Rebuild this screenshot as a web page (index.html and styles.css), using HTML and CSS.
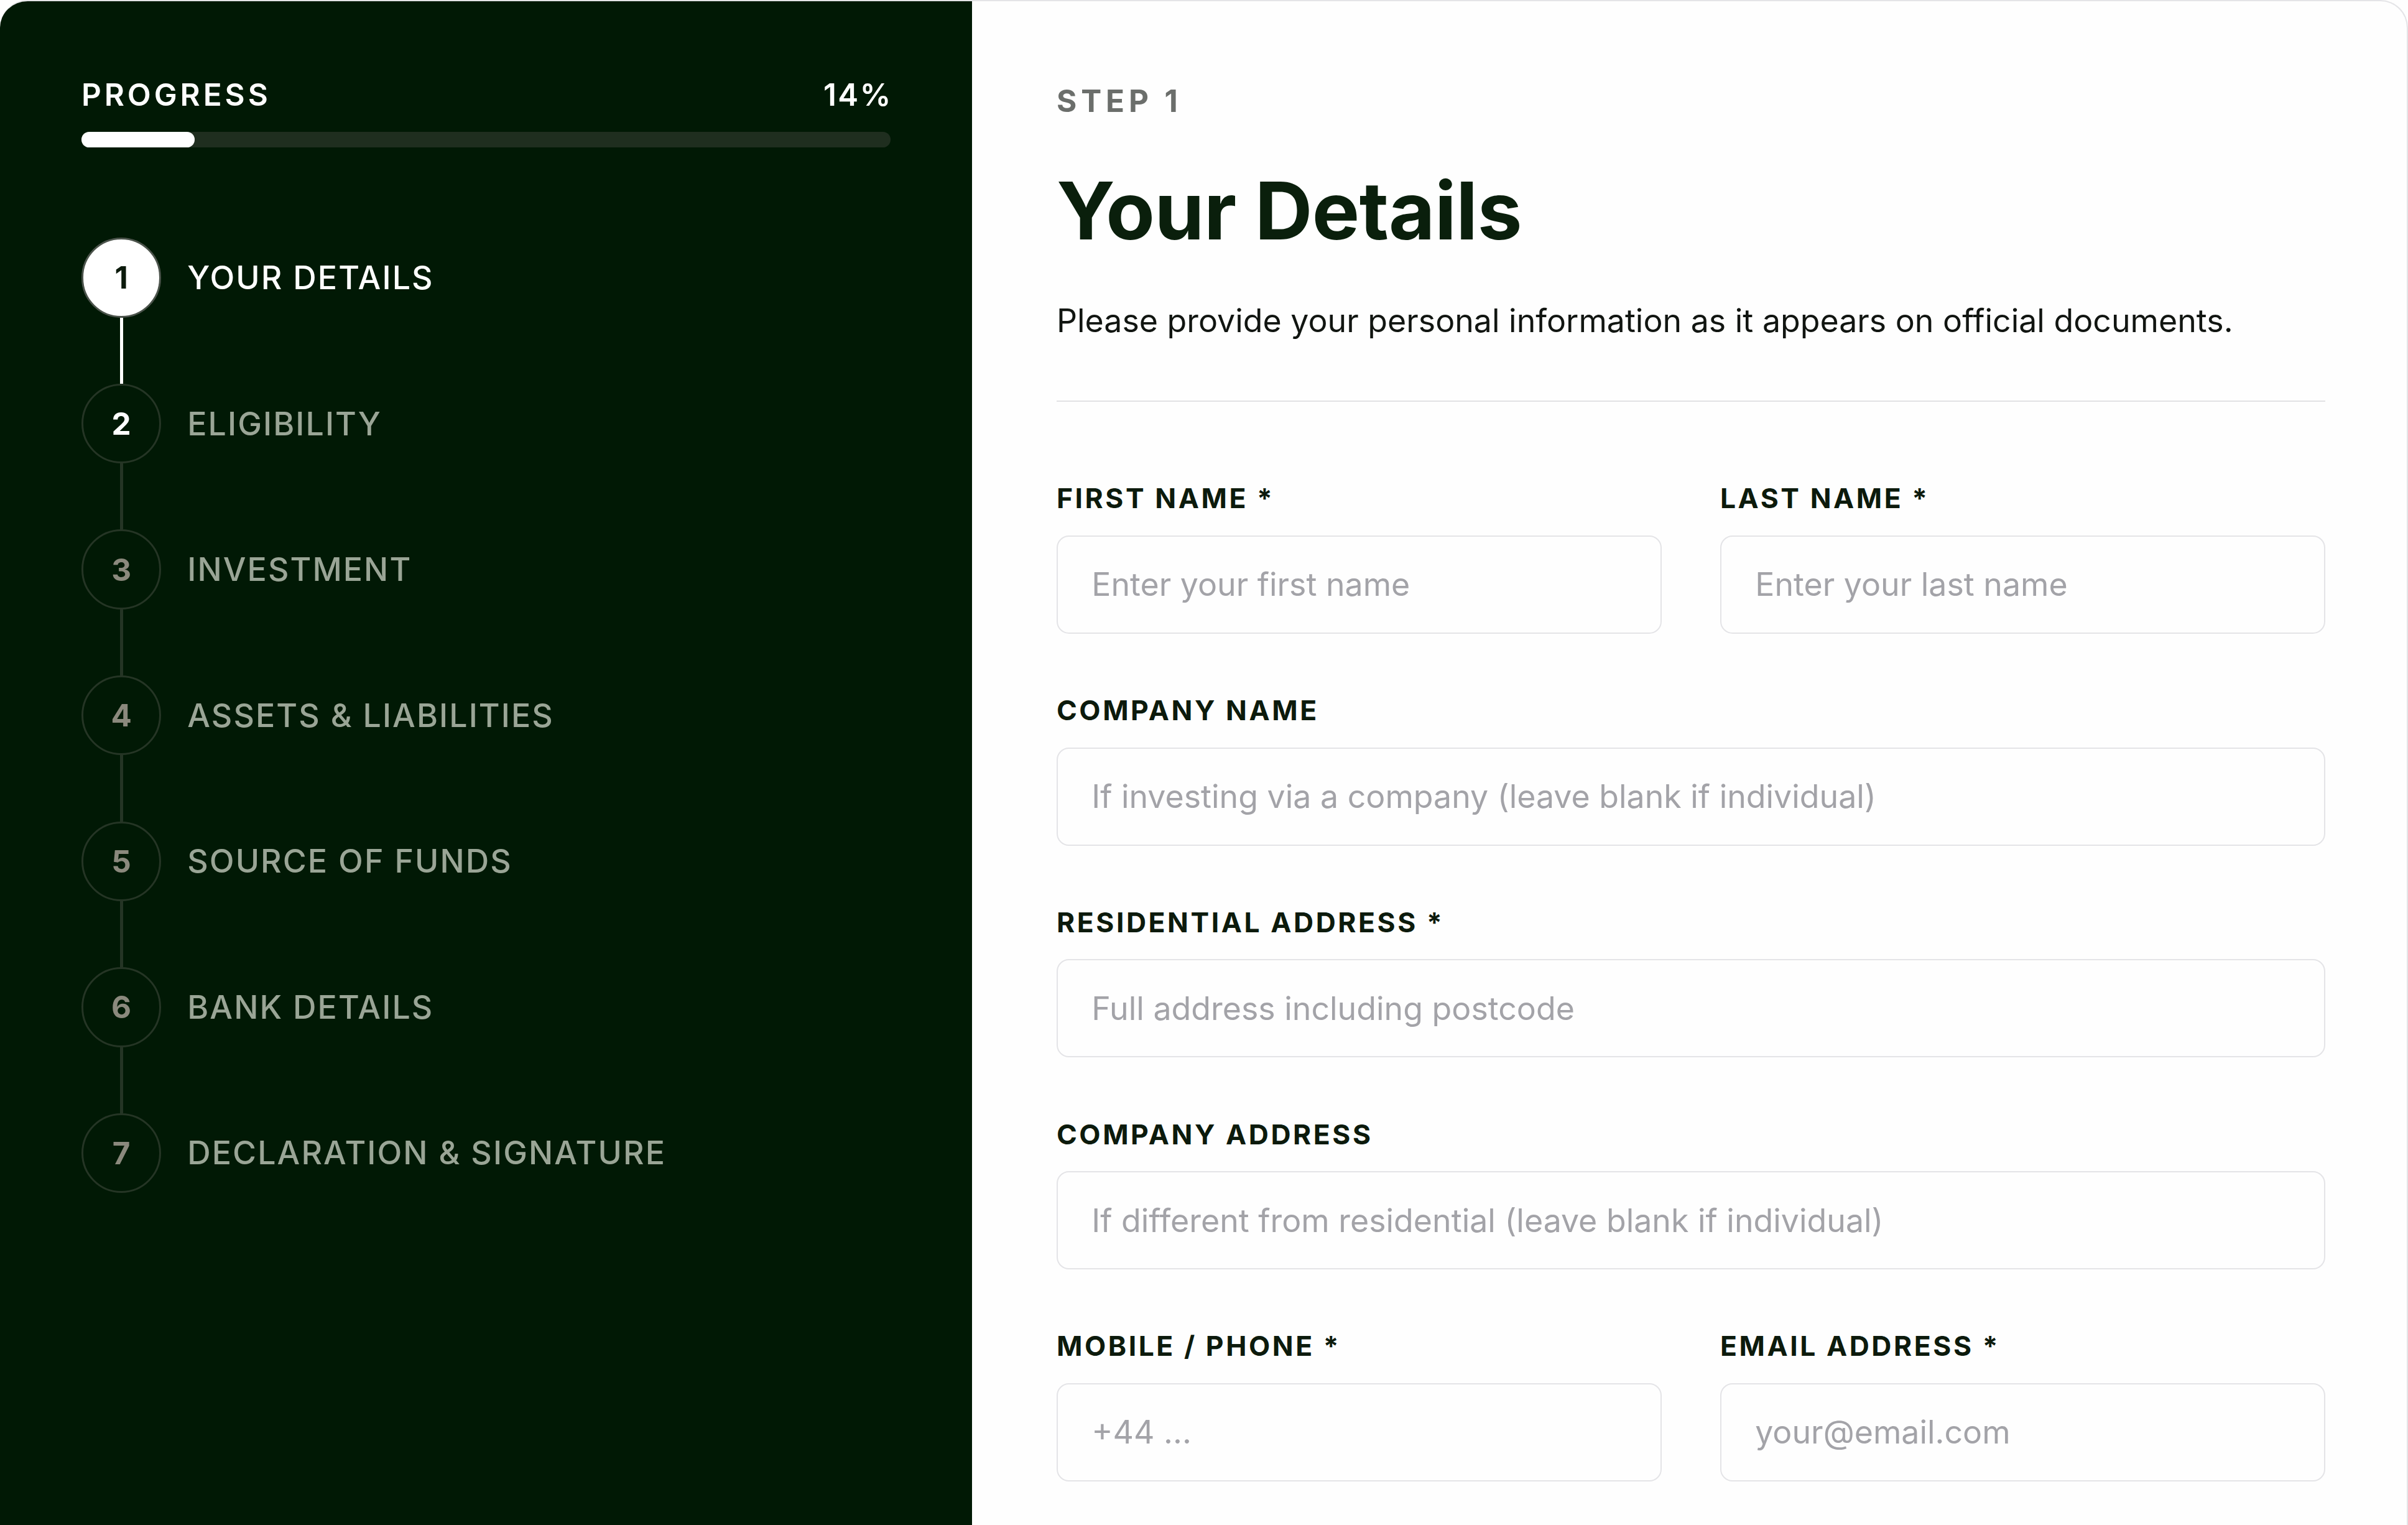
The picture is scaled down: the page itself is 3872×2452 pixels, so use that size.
FILE: index.html
```html
<!DOCTYPE html>
<html lang="en">
<head>
    <meta charset="UTF-8">
    <meta name="viewport" content="width=device-width, initial-scale=1.0">
    <title>Investor Application - Your Details</title>
    <link rel="stylesheet" href="styles.css">
</head>
<body>
    <div class="card">
        <aside class="sidebar">
            <div class="progress-head">
                <span>PROGRESS</span>
                <span class="pct">14%</span>
            </div>
            <div class="progress-track">
                <div class="progress-fill" style="width: 14%"></div>
            </div>

            <ol class="steps">
                <li class="step active">
                    <span class="step-num">1</span>
                    <span class="step-label">YOUR DETAILS</span>
                </li>
                <li class="step-line done"></li>
                <li class="step next">
                    <span class="step-num">2</span>
                    <span class="step-label">ELIGIBILITY</span>
                </li>
                <li class="step-line"></li>
                <li class="step">
                    <span class="step-num">3</span>
                    <span class="step-label">INVESTMENT</span>
                </li>
                <li class="step-line"></li>
                <li class="step">
                    <span class="step-num">4</span>
                    <span class="step-label">ASSETS &amp; LIABILITIES</span>
                </li>
                <li class="step-line"></li>
                <li class="step">
                    <span class="step-num">5</span>
                    <span class="step-label">SOURCE OF FUNDS</span>
                </li>
                <li class="step-line"></li>
                <li class="step">
                    <span class="step-num">6</span>
                    <span class="step-label">BANK DETAILS</span>
                </li>
                <li class="step-line"></li>
                <li class="step">
                    <span class="step-num">7</span>
                    <span class="step-label">DECLARATION &amp; SIGNATURE</span>
                </li>
            </ol>
        </aside>

        <main class="content">
            <div class="eyebrow">STEP 1</div>
            <h1>Your Details</h1>
            <p class="intro">Please provide your personal information as it appears on official documents.</p>
            <hr class="divider">

            <form class="form">
                <div class="row">
                    <div class="field">
                        <label for="first">FIRST NAME *</label>
                        <input type="text" id="first" placeholder="Enter your first name">
                    </div>
                    <div class="field">
                        <label for="last">LAST NAME *</label>
                        <input type="text" id="last" placeholder="Enter your last name">
                    </div>
                </div>
                <div class="field">
                    <label for="company">COMPANY NAME</label>
                    <input type="text" id="company" placeholder="If investing via a company (leave blank if individual)">
                </div>
                <div class="field">
                    <label for="address">RESIDENTIAL ADDRESS *</label>
                    <input type="text" id="address" placeholder="Full address including postcode">
                </div>
                <div class="field">
                    <label for="company-address">COMPANY ADDRESS</label>
                    <input type="text" id="company-address" placeholder="If different from residential (leave blank if individual)">
                </div>
                <div class="row">
                    <div class="field">
                        <label for="phone">MOBILE / PHONE *</label>
                        <input type="tel" id="phone" placeholder="+44 ...">
                    </div>
                    <div class="field">
                        <label for="email">EMAIL ADDRESS *</label>
                        <input type="email" id="email" placeholder="your@email.com">
                    </div>
                </div>
            </form>
        </main>
    </div>
</body>
</html>
```

FILE: styles.css
```css
html {
    zoom: 2.4694;
}
body {
    margin: 0;
    background: #fefefe;
    font-family: 'Inter', 'Noto Sans', sans-serif;
    color: #0c1a0c;
}
.card {
    display: flex;
    min-height: 993px;
    border: 1px solid #e4e4e7;
    border-left: none;
    border-bottom: none;
    border-radius: 18px 18px 0 0;
    overflow: hidden;
    box-sizing: border-box;
}

/* left: progress + steps */
.sidebar {
    width: 633px;
    flex-shrink: 0;
    background: #011905;
    padding: 49px 53px 0 53px;
    box-sizing: border-box;
}
.progress-head {
    display: flex;
    justify-content: space-between;
    color: #fff;
    font-size: 20px;
    font-weight: 600;
    letter-spacing: 0.1em;
    line-height: 24px;
}
.progress-head .pct {
    letter-spacing: 0.05em;
    margin-right: -0.05em;
}
.progress-track {
    margin-top: 12px;
    height: 10px;
    border-radius: 5px;
    background: #1f2e1f;
}
.progress-fill {
    height: 100%;
    border-radius: 5px;
    background: #fff;
}
.steps {
    list-style: none;
    margin: 59px 0 0;
    padding: 0;
}
.step {
    display: flex;
    align-items: center;
    gap: 17px;
}
.step-num {
    width: 52px;
    height: 52px;
    border-radius: 50%;
    border: 1.5px solid #253525;
    box-sizing: border-box;
    display: flex;
    align-items: center;
    justify-content: center;
    font-size: 20px;
    font-weight: 700;
    color: #8b897d;
}
.step-label {
    font-size: 21px;
    font-weight: 500;
    letter-spacing: 0.04em;
    color: #9aa596;
}
.step.active .step-num {
    background: #fff;
    border-color: #4c544c;
    color: #0c1a0c;
}
.step.active .step-label {
    color: #fff;
}
.step.next .step-num {
    color: #fff;
}
.step-line {
    width: 2px;
    height: 43px;
    margin-left: 25px;
    background: #253525;
}
.step-line.done {
    background: #fff;
}

/* right: form */
.content {
    flex: 1;
    padding: 53px 53px 0 55px;
}
.eyebrow {
    font-size: 20px;
    font-weight: 700;
    letter-spacing: 0.14em;
    line-height: 24px;
    color: #6b6e6b;
}
h1 {
    margin: 31px 0 0;
    font-size: 52px;
    line-height: 57px;
    font-weight: 700;
    letter-spacing: -0.2px;
    color: #0a1f0c;
}
.intro {
    margin: 28px 0 0;
    font-size: 21px;
    line-height: 30px;
    color: #111511;
}
.divider {
    margin: 37px 0 0;
    border: none;
    border-top: 1px solid #e2e2e4;
}
.form {
    margin-top: 52px;
    display: flex;
    flex-direction: column;
    gap: 39px;
}
.row {
    display: grid;
    grid-template-columns: 1fr 1fr;
    gap: 38px;
}
.field label {
    display: block;
    margin-bottom: 13px;
    font-size: 18px;
    line-height: 22px;
    font-weight: 700;
    letter-spacing: 0.08em;
    color: #0c1a0c;
}
.field input {
    display: block;
    width: 100%;
    height: 64px;
    box-sizing: border-box;
    padding: 0 22px;
    border: 1px solid #e4e4e7;
    border-radius: 8px;
    background: #fefefe;
    font-family: 'Inter', 'Noto Sans', sans-serif;
    font-size: 21px;
    color: #0c1a0c;
    outline: none;
}
.field input::placeholder {
    color: #a3a3a8;
}
```
